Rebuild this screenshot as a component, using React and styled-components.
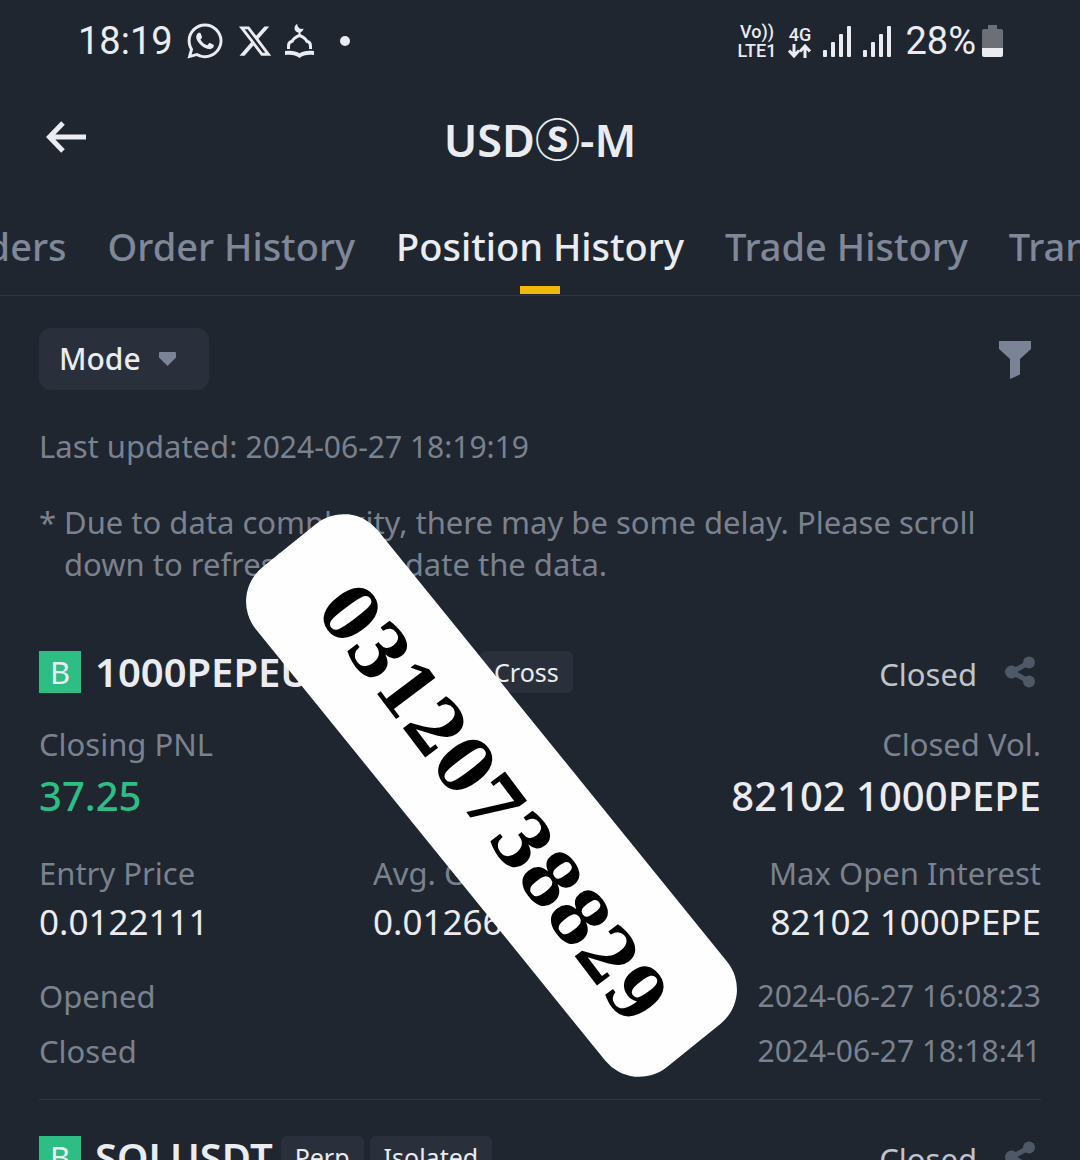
import React from "react";
import styled, { createGlobalStyle, css } from "styled-components";
import { FaWhatsapp } from "react-icons/fa";
import { FaXTwitter } from "react-icons/fa6";

const color = {
  bg: "#1f2630",
  panel: "#29303c",
  line: "#303843",
  text: "#eaecf1",
  soft: "#bfc3cb",
  muted: "#7b818e",
  tab: "#7f8798",
  dim: "#4e5866",
  icon: "#7a8496",
  green: "#2ebd85",
  yellow: "#f0b90b",
};

const GlobalStyle = createGlobalStyle`
  *, *::before, *::after { box-sizing: border-box; }
  body {
    margin: 0;
    background: ${color.bg};
    color: ${color.text};
    font-family: "Noto Sans", sans-serif;
  }
  h1, h2, p, dl, dt, dd { margin: 0; font: inherit; }
  button {
    border: 0;
    padding: 0;
    background: none;
    color: inherit;
    font: inherit;
    cursor: pointer;
  }
  svg { display: block; }
`;

const Screen = styled.div`
  position: relative;
  display: flex;
  flex-direction: column;
  height: 100vh;
  overflow: hidden;
`;

const StatusBar = styled.div`
  display: flex;
  flex-shrink: 0;
  justify-content: space-between;
  align-items: center;
  height: 80px;
  padding: 2px 77px 0 78px;
  font-family: Roboto, sans-serif;
  font-size: 38px;
  line-height: 44px;
`;

const StatusGroup = styled.div`
  display: flex;
  align-items: center;
  gap: 12px;
`;

const Dot = styled.span`
  width: 10px;
  height: 10px;
  margin-left: 14px;
  border-radius: 50%;
  background: ${color.text};
`;

const StackedLabel = styled.span`
  display: flex;
  flex-direction: column;
  align-items: center;
  font-size: 18px;
  font-weight: 500;
  line-height: 19px;
`;

const BatteryLevel = styled.span`
  display: flex;
  align-items: center;
  gap: 6px;
  margin-left: 2px;
`;

const Header = styled.header`
  display: grid;
  flex-shrink: 0;
  grid-template-columns: 1fr auto 1fr;
  align-items: center;
  height: 120px;
  padding: 0 45px;
`;

const BackButton = styled.button`
  justify-self: start;
  padding-bottom: 6px;
`;

const Title = styled.h1`
  font-size: 45px;
  font-weight: 600;
  line-height: 60px;
`;

const CoinMark = styled.span`
  font-family: "Noto Sans CJK JP", sans-serif;
  font-weight: 700;
  line-height: 1;
`;

const Tabs = styled.nav`
  display: grid;
  flex-shrink: 0;
  grid-template-columns: minmax(0, 1fr) auto minmax(0, 1fr);
  gap: 41px;
  padding-top: 22px;
  border-bottom: 1px solid ${color.line};
  overflow: hidden;
`;

const TabSide = styled.div`
  display: flex;
  justify-content: ${(p) => p.$align};
  gap: 41px;
`;

const Tab = styled.button`
  display: flex;
  flex-direction: column;
  flex-shrink: 0;
  align-items: center;
  gap: 16px;
  color: ${color.tab};
  font-size: 38px;
  font-weight: 500;
  line-height: 48px;
  white-space: nowrap;

  &::after {
    content: "";
    width: 40px;
    height: 8px;
    margin-bottom: 1px;
  }

  ${(p) =>
    p.$active &&
    css`
      color: ${color.text};
      &::after { background: ${color.yellow}; }
    `}
`;

const Content = styled.main`
  flex-shrink: 0;
  padding: 32px 39px 0;
`;

const FilterRow = styled.div`
  display: flex;
  justify-content: space-between;
  align-items: center;
`;

const ModeButton = styled.button`
  display: flex;
  align-items: center;
  gap: 18px;
  min-width: 170px;
  height: 62px;
  padding: 0 20px;
  border-radius: 12px;
  background: ${color.panel};
  font-size: 30px;
  font-weight: 500;
  line-height: 42px;
`;

const FunnelButton = styled.button`
  padding: 2px 10px 0 0;
`;

const Updated = styled.p`
  margin-top: 35px;
  color: ${color.muted};
  font-size: 31px;
  line-height: 42px;
`;

const Stamp = styled.time`
  font-size: 30px;
`;

const Note = styled.div`
  display: grid;
  grid-template-columns: 25px 1fr;
  margin-top: 33px;
  color: ${color.muted};
  font-size: 31px;
  line-height: 42px;
`;

const CardHead = styled.div`
  display: flex;
  align-items: center;
  height: 42px;
`;

const Side = styled.span`
  width: 42px;
  margin-right: 14px;
  background: ${color.green};
  font-size: 31px;
  line-height: 42px;
  text-align: center;
`;

const Symbol = styled.h2`
  margin-right: 8px;
  font-size: 40px;
  font-weight: 600;
  line-height: 42px;
`;

const Tag = styled.span`
  margin-right: 6px;
  padding: 0 14px;
  border-radius: 6px;
  background: ${color.panel};
  font-size: 25px;
  line-height: 42px;
`;

const State = styled.span`
  margin: 4px 28px 0 auto;
  color: ${color.soft};
  font-size: 31px;
  line-height: 42px;
`;

const ShareButton = styled.button`
  padding-right: 6px;
`;

const Card = styled.article`
  display: flex;
  flex-direction: column;
  gap: 30px;
  padding-bottom: 27px;
  margin-bottom: 36px;
  border-bottom: 1px solid ${color.line};
`;

const CardList = styled.section`
  margin-top: 66px;
`;

const Stats = styled.dl`
  display: grid;
  grid-template-columns: repeat(${(p) => p.$columns}, 1fr);
`;

const Stat = styled.div`
  display: flex;
  flex-direction: column;
  gap: 5px;
  white-space: nowrap;

  &:last-child { align-items: flex-end; }
`;

const Label = styled.dt`
  color: ${color.muted};
  font-size: 31px;
  line-height: 42px;
`;

const Value = styled.dd`
  color: ${(p) => (p.$gain ? color.green : color.text)};
  font-size: ${(p) => (p.$large ? 40 : 35)}px;
  font-weight: ${(p) => (p.$large ? 500 : 400)};
  line-height: ${(p) => (p.$large ? 52 : 46)}px;
`;

const Times = styled.dl`
  display: flex;
  flex-direction: column;
  gap: 13px;
`;

const TimeRow = styled.div`
  display: flex;
  justify-content: space-between;
  color: ${color.muted};
  font-size: 30px;
  line-height: 42px;
`;

const Sticker = styled.div`
  position: absolute;
  top: 717px;
  left: 170px;
  display: flex;
  justify-content: center;
  align-items: center;
  width: 643px;
  height: 157px;
  padding: 8px 0 0 14px;
  border-radius: 44px;
  background: #fefefe;
  color: #000;
  font-family: "DejaVu Serif Condensed", "DejaVu Serif", serif;
  font-size: 76px;
  font-weight: 700;
  line-height: 1;
  transform: rotate(51deg);
`;

const StickerText = styled.span`
  transform: rotate(2deg);
`;

const MosqueIcon = () => (
  <svg width="29" height="34" viewBox="0 0 29 34" fill={color.text}>
    <path d="M12.200 0a4.500 4.500 0 1 0 6.300 4.600a4.600 4.600 0 0 1-6.300-4.600z" />
    <path d="M14.500 8v4" stroke={color.text} strokeWidth="2" />
    <path
      d="M3.500 25v-3c0-2.400 1.300-4.200 3.700-4.700c1-3 3.600-4.300 7.300-6c3.700 1.700 6.300 3 7.300 6c2.400 .5 3.700 2.300 3.700 4.700v3"
      fill="none"
      stroke={color.text}
      strokeWidth="3"
    />
    <path d="M0 27c6-.8 11-.3 14.500 2.300c3.500-2.600 8.500-3.100 14.500-2.300v4c-5-.7-10.500-.6-14.500 3c-4-3.600-9.500-3.700-14.500-3z" />
  </svg>
);

const SignalIcon = () => (
  <svg width="28" height="31" viewBox="0 0 28 31" fill={color.text}>
    <rect x="0" y="24" width="4" height="7" rx="1" />
    <rect x="8" y="16" width="4" height="15" rx="1" />
    <rect x="16" y="8" width="4" height="23" rx="1" />
    <rect x="24" y="0" width="4" height="31" rx="1" />
  </svg>
);

const BatteryIcon = () => (
  <svg width="21" height="32" viewBox="0 0 21 32">
    <path d="M6 0h9v4h4a2 2 0 0 1 2 2v17H0V6a2 2 0 0 1 2-2h4z" fill="#6c7076" />
    <path d="M0 23h21v7a2 2 0 0 1-2 2H2a2 2 0 0 1-2-2z" fill={color.text} />
  </svg>
);

const DataArrows = () => (
  <svg width="23" height="14" viewBox="0 0 23 14" fill="none" stroke={color.text} strokeWidth="3">
    <path d="M6 0v12M1 6.500l5 5.500l5-5.500" />
    <path d="M17 14V2M12 7.500L17 2l5 5.500" />
  </svg>
);

const BackIcon = () => (
  <svg width="42" height="32" viewBox="0 0 42 32" fill="none" stroke={color.text} strokeWidth="5">
    <path d="M41 16H5M18 2L4.500 16L18 30" />
  </svg>
);

const CaretIcon = () => (
  <svg width="17" height="14" viewBox="0 0 17 14" fill={color.icon}>
    <path d="M1 0h15a1 1 0 0 1 1 1v4.500L8.500 14L0 5.500V1a1 1 0 0 1 1-1z" />
  </svg>
);

const FunnelIcon = () => (
  <svg width="32" height="38" viewBox="0 0 32 38" fill={color.icon}>
    <path d="M0 0h32v8L21 18v15.500L11 38V18L0 8z" />
  </svg>
);

const ShareIcon = () => (
  <svg width="30" height="32" viewBox="0 0 30 32" fill={color.dim} stroke={color.dim}>
    <path d="M24 6.500L7 16l17 9.500" fill="none" strokeWidth="5" />
    <circle cx="24" cy="6.500" r="6" stroke="none" />
    <circle cx="6.500" cy="16" r="6.500" stroke="none" />
    <circle cx="24" cy="25.500" r="6" stroke="none" />
  </svg>
);

const PositionHead = ({ symbol, tags }) => (
  <CardHead>
    <Side>B</Side>
    <Symbol>{symbol}</Symbol>
    {tags.map((tag) => (
      <Tag key={tag}>{tag}</Tag>
    ))}
    <State>Closed</State>
    <ShareButton type="button" aria-label={`Share ${symbol}`}>
      <ShareIcon />
    </ShareButton>
  </CardHead>
);

const StatItem = ({ label, value, large, gain }) => (
  <Stat>
    <Label>{label}</Label>
    <Value $large={large} $gain={gain}>{value}</Value>
  </Stat>
);

const TimeItem = ({ label, value }) => (
  <TimeRow>
    <Label>{label}</Label>
    <dd>
      <Stamp>{value}</Stamp>
    </dd>
  </TimeRow>
);

export default function App() {
  return (
    <>
      <GlobalStyle />
      <Screen>
        <StatusBar>
          <StatusGroup>
            <span>18:19</span>
            <FaWhatsapp size={40} color={color.text} />
            <FaXTwitter size={36} color={color.text} />
            <MosqueIcon />
            <Dot />
          </StatusGroup>
          <StatusGroup>
            <StackedLabel>
              <span>Vo))</span>
              <span>LTE1</span>
            </StackedLabel>
            <StackedLabel>
              <span>4G</span>
              <DataArrows />
            </StackedLabel>
            <SignalIcon />
            <SignalIcon />
            <BatteryLevel>
              <span>28%</span>
              <BatteryIcon />
            </BatteryLevel>
          </StatusGroup>
        </StatusBar>

        <Header>
          <BackButton type="button" aria-label="Back">
            <BackIcon />
          </BackButton>
          <Title>
            USD<CoinMark>Ⓢ</CoinMark>-M
          </Title>
        </Header>

        <Tabs>
          <TabSide $align="flex-end">
            <Tab type="button">Open Orders</Tab>
            <Tab type="button">Order History</Tab>
          </TabSide>
          <Tab type="button" $active>Position History</Tab>
          <TabSide $align="flex-start">
            <Tab type="button">Trade History</Tab>
            <Tab type="button">Transaction History</Tab>
          </TabSide>
        </Tabs>

        <Content>
          <FilterRow>
            <ModeButton type="button">
              Mode
              <CaretIcon />
            </ModeButton>
            <FunnelButton type="button" aria-label="Filter">
              <FunnelIcon />
            </FunnelButton>
          </FilterRow>

          <Updated>
            Last updated: <Stamp>2024-06-27 18:19:19</Stamp>
          </Updated>
          <Note>
            <span>*</span>
            <p>
              Due to data complexity, there may be some delay. Please scroll down to refresh and update the data.
            </p>
          </Note>

          <CardList>
            <Card>
              <PositionHead symbol="1000PEPEUSDT" tags={["Perp", "Cross"]} />
              <Stats $columns={2}>
                <StatItem label="Closing PNL" value="37.25" large gain />
                <StatItem label="Closed Vol." value="82102 1000PEPE" large />
              </Stats>
              <Stats $columns={3}>
                <StatItem label="Entry Price" value="0.0122111" />
                <StatItem label="Avg. Close Price" value="0.0126648" />
                <StatItem label="Max Open Interest" value="82102 1000PEPE" />
              </Stats>
              <Times>
                <TimeItem label="Opened" value="2024-06-27 16:08:23" />
                <TimeItem label="Closed" value="2024-06-27 18:18:41" />
              </Times>
            </Card>
            <PositionHead symbol="SOLUSDT" tags={["Perp", "Isolated"]} />
          </CardList>
        </Content>

        <Sticker>
          <StickerText>03120738829</StickerText>
        </Sticker>
      </Screen>
    </>
  );
}
